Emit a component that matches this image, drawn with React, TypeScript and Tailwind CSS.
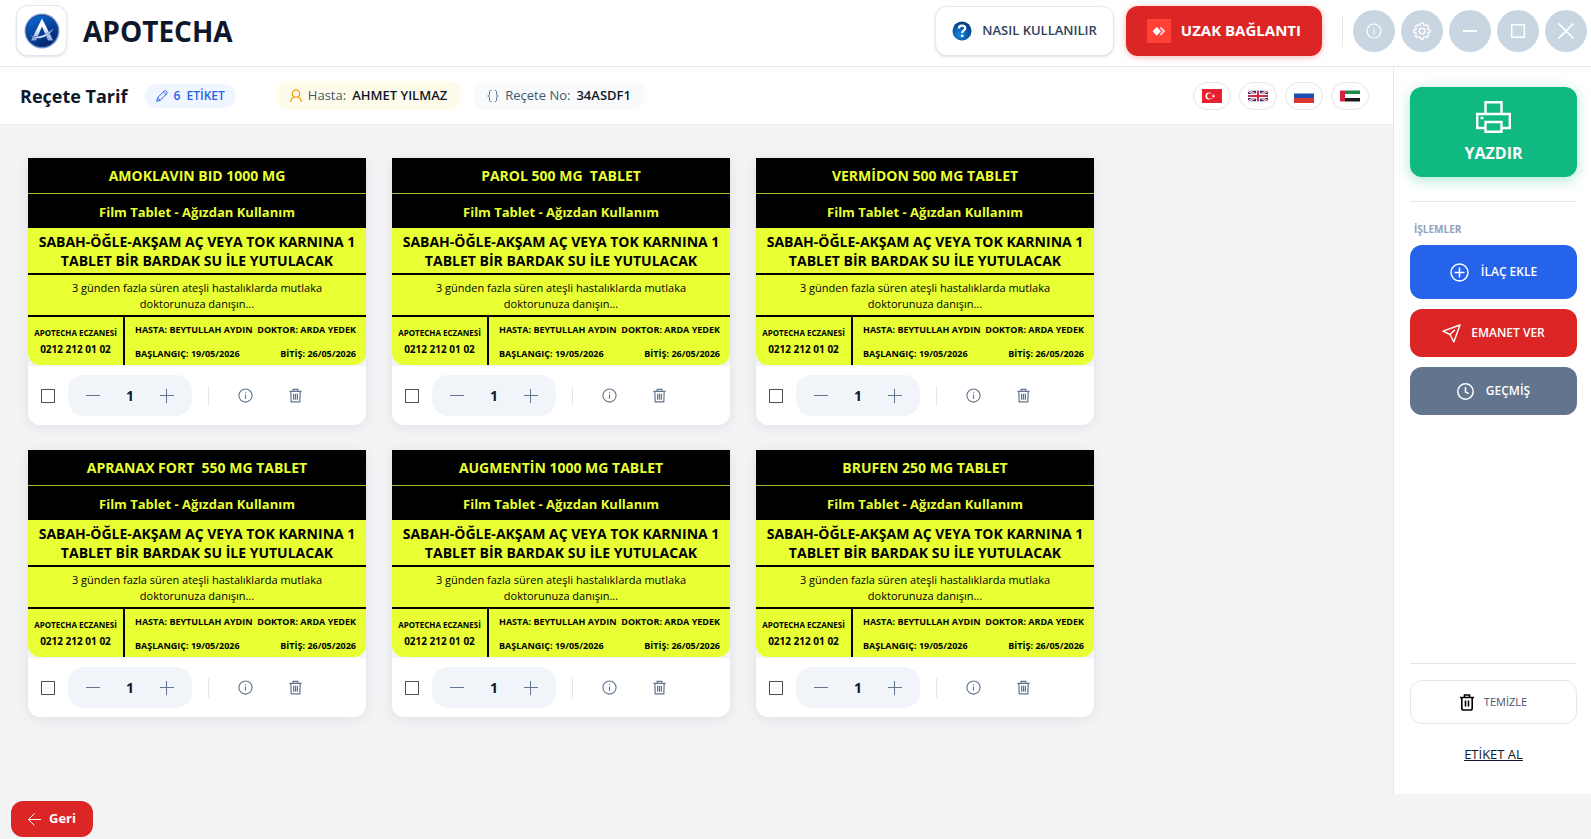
import { useState } from 'react';
import type { ReactNode } from 'react';

const labels = [
  { id: 1, name: 'AMOKLAVIN BID 1000 MG' },
  { id: 2, name: 'PAROL 500 MG  TABLET' },
  { id: 3, name: 'VERMİDON 500 MG TABLET' },
  { id: 4, name: 'APRANAX FORT  550 MG TABLET' },
  { id: 5, name: 'AUGMENTİN 1000 MG TABLET' },
  { id: 6, name: 'BRUFEN 250 MG TABLET' },
];

type IconProps = { className: string; box?: string; width?: number; children: ReactNode };

function Icon({ className, box = '0 0 16 16', width = 1, children }: IconProps) {
  return (
    <svg
      className={`shrink-0 ${className}`}
      viewBox={box}
      fill="none"
      stroke="currentColor"
      strokeWidth={width}
      aria-hidden="true"
    >
      {children}
    </svg>
  );
}

function InfoIcon({ className }: { className: string }) {
  return (
    <Icon className={className} width={1.2}>
      <circle cx="8" cy="8" r="7" />
      <path d="M8 7v4.5M8 4.5v1.2" />
    </Icon>
  );
}

function GearIcon() {
  return (
    <Icon className="w-[18px] h-[18px]" box="0 0 18 18" width={1.3}>
      <circle cx="9" cy="9" r="2.8" />
      <path d="M7.6 1.2h2.8l.4 2 1.3.5 1.7-1.1 1.9 1.9-1.1 1.7.5 1.3 2 .4v2.4l-2 .4-.5 1.3 1.1 1.7-1.9 1.9-1.7-1.1-1.3.5-.4 2H7.6l-.4-2-1.3-.5-1.7 1.1-1.9-1.9 1.1-1.7-.5-1.3-2-.4V7.9l2-.4.5-1.3-1.1-1.7 1.9-1.9 1.7 1.1 1.3-.5z" strokeLinejoin="round" />
    </Icon>
  );
}

function Logo() {
  return (
    <svg className="w-9 h-9" viewBox="0 0 36 36" aria-hidden="true">
      <defs>
        <linearGradient id="logoBg" x1="0" y1="0" x2="0.6" y2="1">
          <stop offset="0" stopColor="#0a6fdc" />
          <stop offset="1" stopColor="#04246e" />
        </linearGradient>
        <linearGradient id="logoLeg" x1="0" y1="0" x2="0" y2="1">
          <stop offset="0.4" stopColor="#ffffff" />
          <stop offset="1" stopColor="#7fa8dc" />
        </linearGradient>
      </defs>
      <circle cx="18" cy="18" r="17.5" fill="#7d9fd0" />
      <circle cx="18" cy="18" r="16.3" fill="#123f8f" />
      <circle cx="18" cy="18" r="15.2" fill="url(#logoBg)" />
      <path d="M18 5.500 7 27.500h5L18 13.500l6 14h5.200z" fill="url(#logoLeg)" />
      <path d="M5 21.500c5 3.500 15 3 25-6.500-5 9-17 14.500-25 6.500z" fill="#f1f6fd" stroke="#0b3f94" strokeWidth="0.600" />
    </svg>
  );
}

function HelpIcon() {
  return (
    <svg className="w-5 h-5 shrink-0" viewBox="0 0 20 20" aria-hidden="true">
      <defs>
        <radialGradient id="helpBg" cx="0.4" cy="0.7" r="0.7">
          <stop offset="0" stopColor="#1787e0" />
          <stop offset="1" stopColor="#083a7c" />
        </radialGradient>
      </defs>
      <circle cx="10" cy="10" r="9.5" fill="url(#helpBg)" />
      <path d="M6.900 7.600c0-4 6.300-4 6.300-.4 0 2.300-3 2.300-3 4.700" fill="none" stroke="#fff" strokeWidth="2.200" />
      <circle cx="10.200" cy="14.900" r="1.400" fill="#fff" />
    </svg>
  );
}

function RemoteIcon() {
  return (
    <svg className="w-6 h-6 shrink-0" viewBox="0 0 24 24" aria-hidden="true">
      <path d="M0 0h24v24H0z" fill="#ff4136" />
      <path d="m9.700 8 4.200 4.200-4.200 4.200-4.200-4.200z" fill="#fff" />
      <path d="m13.300 8.500 3.700 3.700-3.700 3.700" fill="none" stroke="#ffd9d6" strokeWidth="1.800" />
    </svg>
  );
}

function Flag({ code }: { code: string }) {
  return (
    <svg className="w-5 h-[14px]" viewBox="0 0 20 14" aria-hidden="true">
      {code === 'tr' && (
        <>
          <path d="M0 0h20v14H0z" fill="#e9212f" />
          <circle cx="7" cy="7" r="3.600" fill="#fff" />
          <circle cx="8" cy="7" r="2.800" fill="#e9212f" />
          <path d="m9.300 7 1.700-.5.100-1.300.9 1.200 1.200-.3-.8.9.8 1-1.200-.3-.9 1.100-.1-1.300z" fill="#fff" />
        </>
      )}
      {code === 'gb' && (
        <>
          <path d="M0 1.500h20v11H0z" fill="#28337a" />
          <path d="m0 1.500 20 11m0-11-20 11" stroke="#fff" strokeWidth="2.400" />
          <path d="m0 1.500 20 11m0-11-20 11" stroke="#cf3047" strokeWidth="0.800" />
          <path d="M10 1.500v11M0 7h20" stroke="#fff" strokeWidth="4" />
          <path d="M10 1.500v11M0 7h20" stroke="#cf2a43" strokeWidth="2.200" />
          <path d="M0 0h20v1.500H0zM0 12.500h20V14H0z" fill="#fff" />
        </>
      )}
      {code === 'ru' && (
        <>
          <path d="M0 0h20v4.500H0z" fill="#fff" />
          <path d="M0 4.500h20V9H0z" fill="#1c4fb4" />
          <path d="M0 9h20v5H0z" fill="#d9392f" />
        </>
      )}
      {code === 'ae' && (
        <>
          <path d="M5 1.500h15V5H5z" fill="#1d8a4c" />
          <path d="M5 5h15v4H5z" fill="#fff" />
          <path d="M5 9h15v3.500H5z" fill="#1c1c1c" />
          <path d="M0 1.500h5v11H0z" fill="#d4213f" />
        </>
      )}
    </svg>
  );
}

const flags = [
  { code: 'tr', title: 'Türkçe' },
  { code: 'gb', title: 'English' },
  { code: 'ru', title: 'Русский' },
  { code: 'ae', title: 'العربية' },
];

function WindowButton({ title, children }: { title: string; children: ReactNode }) {
  return (
    <button
      aria-label={title}
      className="w-[42px] h-[42px] rounded-full bg-slate-300 text-white flex items-center justify-center"
    >
      {children}
    </button>
  );
}

function LabelCard({ name }: { name: string }) {
  const [count, setCount] = useState(1);

  return (
    <article className="bg-white rounded-b-xl shadow-[0_2px_12px_rgba(15,23,42,0.08)]">
      {/* Label preview */}
      <div className="bg-slate-100 border-b border-slate-100">
        <div className="bg-[#e8ff33] text-black rounded-b-xl overflow-hidden text-center">
          <h2 className="h-9 bg-black text-[#e8ff33] border-b border-[#a9b926] text-sm font-bold flex items-center justify-center whitespace-pre">
            {name}
          </h2>
          <p className="h-[34px] pt-[3px] bg-black text-[#e8ff33] text-[13px] font-bold flex items-center justify-center">
            Film Tablet - Ağızdan Kullanım
          </p>
          <p className="px-2 pt-1 pb-[3px] text-sm leading-[19px] font-bold border-b-2 border-black">
            SABAH-ÖĞLE-AKŞAM AÇ VEYA TOK KARNINA 1 TABLET BİR BARDAK SU İLE YUTULACAK
          </p>
          <p className="px-10 pt-[5px] pb-[3px] text-[11px] leading-4 border-b-2 border-black">
            3 günden fazla süren ateşli hastalıklarda mutlaka doktorunuza danışın...
          </p>
          <div className="h-12 flex font-bold">
            <div className="w-[97px] shrink-0 border-r-2 border-black flex flex-col items-center justify-center whitespace-nowrap">
              <span className="text-[8px] leading-4">APOTECHA ECZANESİ</span>
              <span className="text-[10px] leading-4">0212 212 01 02</span>
            </div>
            <div className="flex-1 flex flex-col justify-between px-[10px] pt-[5px] pb-[3px] text-[9px] leading-4 whitespace-nowrap">
              <div className="flex justify-between">
                <span>HASTA: BEYTULLAH AYDIN</span>
                <span>DOKTOR: ARDA YEDEK</span>
              </div>
              <div className="flex justify-between">
                <span>BAŞLANGIÇ: 19/05/2026</span>
                <span>BİTİŞ: 26/05/2026</span>
              </div>
            </div>
          </div>
        </div>
      </div>

      {/* Controls */}
      <div className="h-[59px] px-[13px] flex items-center text-slate-500">
        <input
          type="checkbox"
          aria-label={name}
          className="appearance-none w-[14px] h-[14px] border border-neutral-600 bg-white checked:bg-blue-600"
        />
        <div className="ml-[13px] w-[124px] h-[41px] px-[18px] rounded-2xl bg-slate-100 flex items-center justify-between">
          <button aria-label="Azalt" onClick={() => setCount(Math.max(1, count - 1))}>
            <Icon className="w-[14px] h-[14px]" box="0 0 14 14">
              <path d="M0 6.500h14" />
            </Icon>
          </button>
          <span className="text-sm font-bold text-slate-900">{count}</span>
          <button aria-label="Arttır" onClick={() => setCount(count + 1)}>
            <Icon className="w-[14px] h-[14px]" box="0 0 14 14">
              <path d="M0 6.500h14M6.500 0v14" />
            </Icon>
          </button>
        </div>
        <span className="ml-4 w-px h-5 bg-slate-200" />
        <button aria-label="Bilgi" className="ml-[29px]">
          <InfoIcon className="w-[15px] h-[15px]" />
        </button>
        <button aria-label="Sil" className="ml-[35px]">
          <Icon className="w-[15px] h-[15px]" width={1.3}>
            <path d="M1.500 3.500h13M5.500 3.500V1.400h5v2.100M3 3.500l.4 11.200h9.200L13 3.500M6 6v6.500M8 6v6.500M10 6v6.500" />
          </Icon>
        </button>
      </div>
    </article>
  );
}

export default function App() {
  return (
    <div className="min-h-screen flex flex-col bg-[#f3f3f6] text-slate-900 font-['Open_Sans','Noto_Sans',sans-serif]">
      {/* Header */}
      <header className="bg-white border-b border-slate-200 pl-4 pr-1 pt-[5px] pb-[10px] flex items-center">
        <div className="w-[51px] h-[51px] rounded-xl bg-white border border-slate-200 shadow-sm flex items-center justify-center">
          <Logo />
        </div>
        <span className="ml-4 text-[28px] leading-8 font-bold">APOTECHA</span>

        <div className="ml-auto flex items-center">
          <button className="h-[50px] px-4 rounded-xl bg-white border border-slate-200 shadow-sm flex items-center gap-[10px] text-[13px] font-semibold text-slate-700">
            <HelpIcon />
            NASIL KULLANILIR
          </button>
          <button className="ml-3 h-[50px] px-[21px] rounded-xl bg-[#dc2626] text-white shadow-[0_1px_6px_rgba(220,38,38,0.35)] flex items-center gap-[10px] text-[15px] font-bold">
            <RemoteIcon />
            UZAK BAĞLANTI
          </button>
          <span className="ml-5 mr-[10px] w-px h-8 bg-slate-200" />
          <div className="flex gap-[6px]">
            <WindowButton title="Bilgi">
              <InfoIcon className="w-4 h-4" />
            </WindowButton>
            <WindowButton title="Ayarlar">
              <GearIcon />
            </WindowButton>
            <WindowButton title="Küçült">
              <Icon className="w-4 h-4" width={2}>
                <path d="M1 8h14" />
              </Icon>
            </WindowButton>
            <WindowButton title="Büyüt">
              <Icon className="w-4 h-4" width={1.5}>
                <path d="M1.700 1.700h12.600v12.600H1.700z" />
              </Icon>
            </WindowButton>
            <WindowButton title="Kapat">
              <Icon className="w-4 h-4" width={1.6}>
                <path d="m.5.500 15 15m0-15-15 15" />
              </Icon>
            </WindowButton>
          </div>
        </div>
      </header>

      <div className="flex-1 flex">
        <div className="flex-1 min-w-0 flex flex-col">
          {/* Prescription bar */}
          <div className="h-[58px] bg-white border-b border-[#e8ecf3] pl-5 pr-6 flex items-center">
            <h1 className="text-lg font-bold">Reçete Tarif</h1>
            <span className="ml-[18px] h-6 px-[11px] rounded-full bg-[#eff6ff] text-[#2563eb] text-xs font-semibold flex items-center gap-[5px] whitespace-pre">
              <Icon className="w-3 h-3" box="0 0 12 12">
                <path d="m.7 11.300.9-3.600L8.500.8c1-.8 3.300 1.300 2.500 2.500L4.200 10.300zM7.500 1.900l2.500 2.500M1.600 7.700l2.600 2.600" />
              </Icon>
              {'6  ETİKET'}
            </span>
            <span className="ml-10 h-[29px] px-[14px] rounded-xl bg-[#fffbeb] text-[13px] font-semibold flex items-center gap-[6px]">
              <Icon className="w-3 h-[14px] text-[#f59e0b]" box="0 0 12 14" width={1.2}>
                <circle cx="6" cy="4.500" r="3.700" />
                <path d="M.7 13c.3-3 2-4.500 3.300-5M11.300 13c-.3-3-2-4.500-3.300-5" />
              </Icon>
              <span className="font-medium text-slate-600">Hasta:</span>
              <span>AHMET YILMAZ</span>
            </span>
            <span className="ml-3 h-[29px] px-[14px] rounded-xl bg-slate-50 text-[13px] font-semibold flex items-center gap-[6px]">
              <Icon className="w-3 h-3 text-slate-500" box="0 0 12 12">
                <path d="M4.500.5H4C3 .500 2.500 1 2.500 2v2.300C2.500 5.400 1.800 6 .7 6c1.100 0 1.800.600 1.800 1.700V10c0 1 .5 1.500 1.500 1.500h.5M7.500.5H8c1 0 1.500.5 1.500 1.500v2.300c0 1.100.7 1.700 1.800 1.700-1.100 0-1.800.600-1.800 1.700V10c0 1-.5 1.500-1.500 1.500h-.5" />
              </Icon>
              <span className="font-medium text-slate-600">Reçete No:</span>
              <span>34ASDF1</span>
            </span>

            <div className="ml-auto flex gap-2">
              {flags.map((flag) => (
                <button
                  key={flag.code}
                  aria-label={flag.title}
                  className="w-[38px] h-7 rounded-full border border-slate-200 bg-white flex items-center justify-center"
                >
                  <Flag code={flag.code} />
                </button>
              ))}
            </div>
          </div>

          {/* Labels */}
          <main className="flex-1 px-7 py-[33px] grid grid-cols-[repeat(auto-fill,338px)] content-start gap-x-[26px] gap-y-[25px] max-w-[1150px]">
            {labels.map((label) => (
              <LabelCard key={label.id} name={label.name} />
            ))}
          </main>
        </div>

        {/* Sidebar */}
        <aside className="w-[198px] shrink-0 bg-white border-l border-slate-200 pl-4 pr-[14px] pt-5 pb-[30px] flex flex-col">
          <button className="h-[90px] pt-[2px] rounded-xl bg-[#10b981] text-white shadow-[0_3px_14px_rgba(16,185,129,0.35)] flex flex-col items-center justify-center gap-2 text-base font-bold">
            <Icon className="w-[35px] h-8" box="0 0 35 32" width={2.4}>
              <path d="M9.500 13V1.200h16V13M9.500 27H1.200V13h32.600v14h-8.300M9.500 21h16v9.800h-16zM4.500 17h3" />
            </Icon>
            YAZDIR
          </button>
          <div className="mt-6 border-t border-slate-200" />
          <p className="mt-5 mb-2 pl-1 text-[10px] leading-[15px] font-bold text-slate-400">İŞLEMLER</p>
          <div className="flex flex-col gap-[10px] text-xs font-semibold text-white">
            <button className="h-[54px] rounded-xl bg-[#2563eb] flex items-center justify-center gap-3">
              <Icon className="w-[19px] h-[19px]" box="0 0 19 19" width={1.5}>
                <circle cx="9.500" cy="9.500" r="8.500" />
                <path d="M4.500 9.500h10M9.500 4.500v10" />
              </Icon>
              İLAÇ EKLE
            </button>
            <button className="h-12 rounded-xl bg-[#dc2626] flex items-center justify-center gap-[10px]">
              <Icon className="w-[19px] h-[19px]" box="0 0 19 19" width={1.4}>
                <path d="M18 1 1 7.200l7 3.300 3.800 7.500zM8 10.500l5-4.700" strokeLinejoin="round" />
              </Icon>
              EMANET VER
            </button>
            <button className="h-12 rounded-xl bg-slate-500 flex items-center justify-center gap-3">
              <Icon className="w-[17px] h-[17px]" box="0 0 17 17" width={1.5}>
                <circle cx="8.500" cy="8.500" r="7.700" />
                <path d="M8.500 4v5l3.200 1.600" />
              </Icon>
              GEÇMİŞ
            </button>
          </div>

          <div className="mt-auto border-t border-slate-200" />
          <button className="mt-4 h-11 rounded-xl border border-slate-200 flex items-center justify-center gap-[10px] text-[11px] font-medium text-slate-600">
            <Icon className="w-[14px] h-[17px] text-black" box="0 0 14 17" width={1.6}>
              <path d="M0 3.500h14M4.500 3V1h5v2M1.800 3.500v10.700c0 1.200.6 1.800 1.800 1.800h6.800c1.200 0 1.800-.6 1.800-1.800V3.500M5.500 6.500v6M8.500 6.500v6" />
            </Icon>
            TEMİZLE
          </button>
          <a href="#" className="mt-5 self-center text-[13px] leading-5 font-medium underline">ETİKET AL</a>
        </aside>
      </div>

      {/* Footer */}
      <footer className="h-[45px] pl-[11px] pt-[7px]">
        <button className="h-[36px] px-[17px] rounded-xl bg-[#dc2626] text-white text-[13px] font-bold flex items-center gap-2">
          <Icon className="w-[13px] h-[13px]" box="0 0 13 13">
            <path d="M13 6.500H.7M6.500.5l-6 6 6 6" />
          </Icon>
          Geri
        </button>
      </footer>
    </div>
  );
}
